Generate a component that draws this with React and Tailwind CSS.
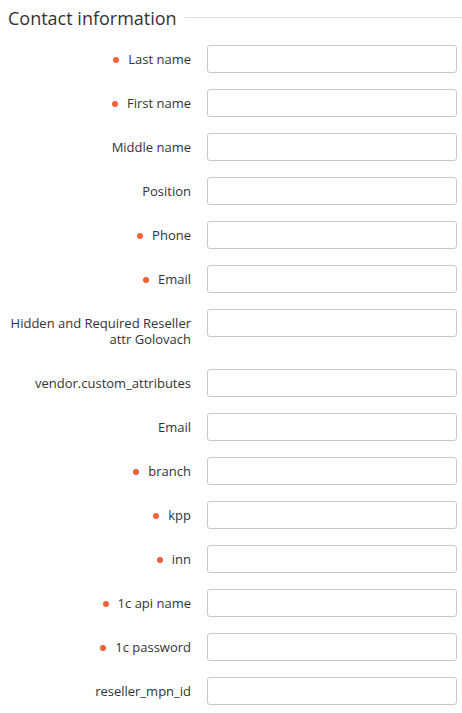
const fields = [
  { label: "Last name", required: true },
  { label: "First name", required: true },
  { label: "Middle name" },
  { label: "Position" },
  { label: "Phone", required: true },
  { label: "Email", required: true },
  { label: "Hidden and Required Reseller attr Golovach" },
  { label: "vendor.custom_attributes" },
  { label: "Email" },
  { label: "branch", required: true },
  { label: "kpp", required: true },
  { label: "inn", required: true },
  { label: "1c api name", required: true },
  { label: "1c password", required: true },
  { label: "reseller_mpn_id" },
]

export default function App() {
  return (
    <div className="w-[462px] h-[713px] bg-white overflow-hidden text-[#333] font-['Open_Sans',sans-serif]">
      {/* Section header */}
      <div className="flex items-center pl-2 pt-[5px] h-[30px]">
        <h2 className="text-[18px] leading-[24px] text-[#333] whitespace-nowrap">Contact information</h2>
        <div className="flex-1 ml-[8px] h-px bg-[#dcdde2]" />
      </div>

      <div className="flex flex-col gap-4 mt-[15px] pr-[5px]">
        {fields.map((f, i) => (
          <div key={i} className="flex items-start">
            <label className="w-[191px] pl-2 py-[6px] text-[13px] leading-[16px] text-right text-[#333]">
              {f.required && (
                <span className="inline-block w-[6px] h-[6px] rounded-full bg-[#f26136] mr-[9px] align-middle relative -top-[1px]" />
              )}
              {f.label}
            </label>
            <input
              type="text"
              className="ml-4 flex-1 h-[28px] rounded-[3px] border border-[#c7c9d1] bg-white outline-none"
            />
          </div>
        ))}
      </div>
    </div>
  )
}
